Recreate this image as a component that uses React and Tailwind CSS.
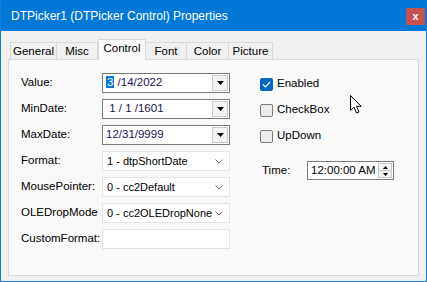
import React from "react";

const font = { fontFamily: '"Liberation Sans", Arial, sans-serif' };

const tabs = ["General", "Misc", "Control", "Font", "Color", "Picture"];
const tabWidths = ["w-[47px]", "w-[41px]", "w-[48px]", "w-[41px]", "w-[42px]", "w-[44px]"];

const DateField = ({ children }) => (
  <div className="flex h-[20px] w-[128px] shrink-0 border border-[#7a7a7a] bg-white">
    <div className="flex flex-1 items-center whitespace-pre pl-[3px] text-[11.5px] leading-none text-[#1b1450]">
      {children}
    </div>
    <div className="m-[1px] flex w-[16px] items-center justify-center border border-[#c8c8c8] bg-[#f3f3f3]">
      <svg width="7" height="4" viewBox="0 0 7 4">
        <path d="M0 0h7L3.5 4z" fill="#000" />
      </svg>
    </div>
  </div>
);

const Combo = ({ value }) => (
  <div className="flex h-[20px] w-[128px] shrink-0 items-center border border-[#e3e3e3] bg-white pl-[4px] pr-[6px]">
    <span className="flex-1 whitespace-nowrap text-[11px] leading-none text-black">{value}</span>
    {value !== undefined && (
      <svg width="8" height="5" viewBox="0 0 8 5">
        <path d="M0.5 0.5L4 4L7.5 0.5" fill="none" stroke="#707070" strokeWidth="1" />
      </svg>
    )}
  </div>
);

const Check = ({ checked, label }) => (
  <div className="flex h-[20px] items-center gap-[4px]">
    {checked ? (
      <div className="flex h-[13px] w-[13px] items-center justify-center rounded-[2px] bg-[#0067c0]">
        <svg width="9" height="7" viewBox="0 0 9 7">
          <path d="M1 3.5L3.5 6L8 1" fill="none" stroke="#fff" strokeWidth="1.2" />
        </svg>
      </div>
    ) : (
      <div className="h-[13px] w-[13px] rounded-[2px] border border-[#7a7a7a] bg-[#ececec]" />
    )}
    <span className="text-[11.5px] leading-none text-black">{label}</span>
  </div>
);

const rows = [
  ["Value:", <DateField key="v"><span><span className="bg-[#0078d7] px-[1px] text-white">3</span> /14/2022</span></DateField>],
  ["MinDate:", <DateField key="mi"> 1 / 1 /1601</DateField>],
  ["MaxDate:", <DateField key="ma">12/31/9999</DateField>],
  ["Format:", <Combo key="f" value="1 - dtpShortDate" />],
  ["MousePointer:", <Combo key="m" value="0 - cc2Default" />],
  ["OLEDropMode", <Combo key="o" value="0 - cc2OLEDropNone" />],
  ["CustomFormat:", <Combo key="c" />],
];

export default function App() {
  return (
    <div style={font} className="flex h-[282px] w-[427px] flex-col border border-t-0 border-[#1979d0] bg-[#f0f0f0]">
      {/* Title bar */}
      <div className="flex h-[31px] items-center justify-between bg-[#0078d7] pl-[10px] pr-[1px]">
        <span className="text-[12px] text-white">DTPicker1 (DTPicker Control) Properties</span>
        <div className="mb-[-2px] flex h-[17px] w-[19px] items-center justify-center bg-[#c75050] text-[11px] font-bold leading-none text-white">
          x
        </div>
      </div>

      <div className="flex flex-1 flex-col px-[7px] pb-[5px] pt-[8px]">
        {/* Tabs */}
        <div className="flex h-[20px] items-end pl-[2px]">
          {tabs.map((t, i) =>
            t === "Control" ? (
              <div
                key={t}
                className={`z-10 mb-[-1px] flex h-[21px] ${tabWidths[i]} items-start justify-center border border-b-0 border-[#d9d9d9] bg-[#f9f9f9] pt-[3px] text-[11.5px] leading-none text-black`}
              >
                {t}
              </div>
            ) : (
              <div
                key={t}
                className={`flex h-[17px] ${tabWidths[i]} items-center justify-center border border-b-0 border-l-0 border-[#d9d9d9] bg-[#f0f0f0] pt-[2px] text-[11.5px] leading-none text-black first:border-l`}
              >
                {t}
              </div>
            )
          )}
        </div>

        {/* Panel */}
        <div className="relative flex flex-1 border border-[#d9d9d9] bg-[#f9f9f9] pl-[12px] pt-[13px]">
          <div className="flex flex-col gap-[6px]">
            {rows.map(([label, field]) => (
              <div key={label} className="flex items-center">
                <span className="w-[81px] shrink-0 whitespace-nowrap text-[11.5px] leading-none text-black">{label}</span>
                {field}
              </div>
            ))}
          </div>

          <div className="ml-[30px] flex flex-col gap-[6px] pt-[1px]">
            <Check checked label="Enabled" />
            <Check label="CheckBox" />
            <Check label="UpDown" />
            <div className="mt-[9px] flex items-center">
              <span className="ml-[2px] w-[45px] text-[11.5px] leading-none text-black">Time:</span>
              <div className="flex h-[19px] w-[87px] border border-[#7a7a7a] bg-white">
                <div className="flex flex-1 items-center whitespace-nowrap pl-[3px] text-[11.5px] leading-none text-black">12:00:00 AM</div>
                <div className="m-[1px] flex w-[14px] flex-col">
                  <div className="flex flex-1 items-center justify-center border border-[#c8c8c8] bg-[#f3f3f3]">
                    <svg width="5" height="3" viewBox="0 0 5 3"><path d="M0 3h5L2.5 0z" fill="#000" /></svg>
                  </div>
                  <div className="flex flex-1 items-center justify-center border border-t-0 border-[#c8c8c8] bg-[#f3f3f3]">
                    <svg width="5" height="3" viewBox="0 0 5 3"><path d="M0 0h5L2.5 3z" fill="#000" /></svg>
                  </div>
                </div>
              </div>
            </div>
          </div>

          {/* Mouse cursor */}
          <svg className="absolute left-[341px] top-[35px]" width="12" height="19" viewBox="0 0 12 19">
            <path d="M0.5 0.5V15.5L4 12.2L6.5 18L9 17L6.5 11.3H11.2Z" fill="#fff" stroke="#000" strokeWidth="1" strokeLinejoin="round" />
          </svg>
        </div>
      </div>
    </div>
  );
}
